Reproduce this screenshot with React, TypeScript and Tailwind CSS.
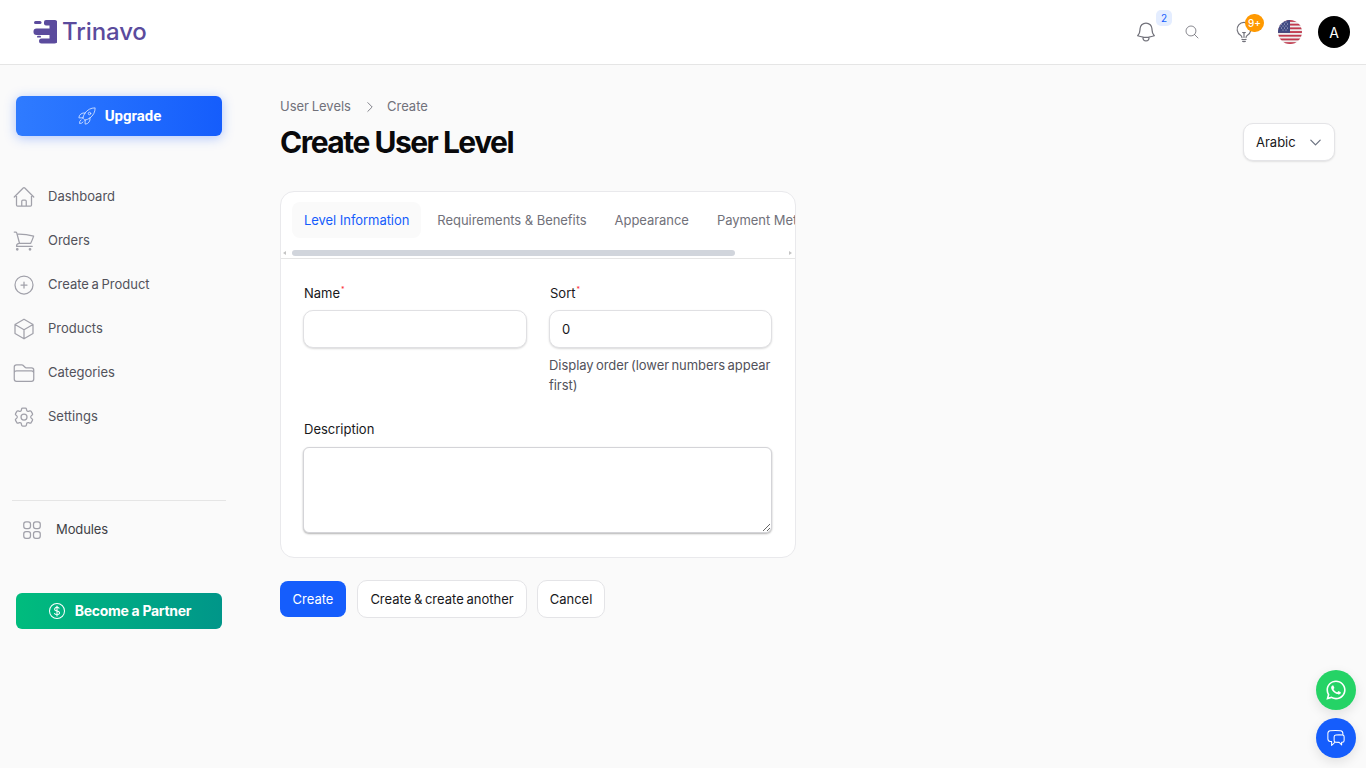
import React from "react";
import {
  HiOutlineHome, HiOutlineShoppingCart, HiOutlinePlusCircle, HiOutlineCube, HiOutlineFolder,
  HiOutlineCog6Tooth, HiOutlineSquares2X2, HiOutlineBell, HiOutlineMagnifyingGlass, HiOutlineLightBulb,
  HiOutlineRocketLaunch, HiOutlineCurrencyDollar, HiOutlineChevronRight, HiOutlineChevronDown,
  HiOutlineChatBubbleLeftRight,
} from "react-icons/hi2";
import { FaWhatsapp } from "react-icons/fa";

const nav = [
  { label: "Dashboard", Icon: HiOutlineHome },
  { label: "Orders", Icon: HiOutlineShoppingCart },
  { label: "Create a Product", Icon: HiOutlinePlusCircle },
  { label: "Products", Icon: HiOutlineCube },
  { label: "Categories", Icon: HiOutlineFolder },
  { label: "Settings", Icon: HiOutlineCog6Tooth },
];

function Logo() {
  return (
    <svg width="24" height="24" viewBox="0 0 24 24" fill="#5b4b9d">
      <rect x="11" y="0" width="13" height="5.500" rx="2" />
      <rect x="16.500" y="1" width="7.500" height="22" rx="1" />
      <rect x="0.500" y="8.500" width="20" height="6.500" rx="3" />
      <rect x="6" y="18.500" width="18" height="5" rx="2.500" />
      <rect x="1" y="1" width="7.500" height="3" rx="1.500" />
      <rect x="4" y="15.800" width="4" height="1.800" rx="0.900" />
    </svg>
  );
}

function Flag() {
  const stripes = [0, 2, 4, 6, 8, 10, 12];
  const stars = [[2, 2], [5, 2], [8, 2], [3.500, 4], [6.500, 4], [9.500, 4], [2, 6], [5, 6], [8, 6], [3.500, 8], [6.500, 8], [9.500, 8], [5, 10], [8, 10]];
  return (
    <svg width="24" height="24" viewBox="0 0 24 24" className="rounded-full">
      <rect width="24" height="24" fill="#eeeeee" />
      {stripes.map((i) => (
        <rect key={i} y={i * 1.85} width="24" height="1.85" fill="#c0394d" />
      ))}
      <rect width="12" height="12.900" fill="#414a82" />
      {stars.map(([x, y]) => (
        <circle key={`${x}-${y}`} cx={x} cy={y} r="0.500" fill="#dfe2f0" />
      ))}
    </svg>
  );
}

export default function App() {
  return (
    <div className="min-h-[768px] bg-[#fafafa] font-['Inter',sans-serif] text-[14px] text-[#18181b]">
      <header className="flex h-[65px] items-center border-b border-[#e5e5e5] bg-white pl-[33px] pr-4">
        <div className="flex items-center gap-[5px]">
          <Logo />
          <span className="text-[24px] font-medium leading-none tracking-[-0.1px] text-[#5b4b9d]">Trinavo</span>
        </div>
        <div className="ml-auto flex items-center">
          <div className="relative flex w-6 justify-center">
            <HiOutlineBell size={24} strokeWidth={1.25} className="text-[#71717a]" />
            <span className="absolute left-[22px] top-[-10px] flex h-4 w-4 items-center justify-center rounded-[5px] bg-[#e4edff] text-[10px] text-[#155dfc]">2</span>
          </div>
          <HiOutlineMagnifyingGlass size={16} strokeWidth={1.25} className="ml-[26px] text-[#71717a]" />
          <div className="relative ml-[32px] flex w-6 justify-center">
            <HiOutlineLightBulb size={22} strokeWidth={1.25} className="text-[#71717a]" />
            <span className="absolute left-[13px] top-[-7px] flex h-[18px] w-[19px] items-center justify-center rounded-full bg-[#ff9900] text-[10px] font-medium text-white">9+</span>
          </div>
          <div className="ml-[22px]"><Flag /></div>
          <div className="ml-4 flex h-8 w-8 items-center justify-center rounded-full bg-black text-[14px] text-white">A</div>
        </div>
      </header>

      <div className="flex">
        <aside className="w-[240px] shrink-0 pl-3 pt-[31px]">
          <button className="ml-1 flex h-10 w-[206px] items-center justify-center gap-2 rounded-[6px] bg-gradient-to-r from-[#2f7bff] to-[#155dfc] font-['Roboto',sans-serif] text-[15px] font-bold text-white shadow-[0_2px_12px_rgba(37,99,255,0.35)]">
            <HiOutlineRocketLaunch size={20} strokeWidth={1} className="text-[#dbe7ff]" />
            Upgrade
          </button>
          <nav className="mt-[39px] flex flex-col">
            {nav.map(({ label, Icon }) => (
              <div key={label} className="flex h-11 items-center gap-3 text-[#52525b]">
                <Icon size={24} strokeWidth={1.25} className="text-[#a1a1aa]" />
                <span className="text-[13px] [word-spacing:-1px]">{label}</span>
              </div>
            ))}
          </nav>
          <div className="mt-[61px] w-[214px] border-t border-[#e5e5e5]" />
          <div className="mt-[17px] flex h-6 items-center gap-3 pl-2 text-[#3f3f46]">
            <HiOutlineSquares2X2 size={24} strokeWidth={1.25} className="text-[#a1a1aa]" />
            <span className="text-[13px] tracking-[-0.1px]">Modules</span>
          </div>
          <button className="ml-1 mt-[51px] flex h-9 w-[206px] items-center justify-center gap-2 rounded-[6px] bg-gradient-to-r from-[#00bc7d] to-[#009689] pb-[1px] text-[14px] font-bold tracking-[-0.3px] text-white">
            <HiOutlineCurrencyDollar size={20} strokeWidth={1.25} />
            Become a Partner
          </button>
        </aside>

        <main className="flex-1 pl-10 pr-[31px] pt-[33px]">
          <div className="flex h-[18px] items-center text-[13px] text-[#71717a]">
            <span className="[word-spacing:-1px]">User Levels</span>
            <HiOutlineChevronRight size={14} className="ml-[12px] mr-[10px] text-[#71717a]" />
            <span>Create</span>
          </div>
          <div className="mt-[4px] flex items-start justify-between">
            <h1 className="mt-[4px] text-[30px] font-bold leading-[36px] tracking-[-1.5px] text-[#09090b]">Create User Level</h1>
            <button className="mt-[3px] flex h-[38px] w-[92px] items-center justify-between rounded-[10px] border border-[#e4e4e7] bg-white pl-3 pr-[11px] pt-[1px] text-[13px] text-[#18181b] shadow-[0_1px_2px_rgba(0,0,0,0.1)]">
              Arabic
              <HiOutlineChevronDown size={15} strokeWidth={2} className="text-[#6b7280]" />
            </button>
          </div>

          <section className="mt-[30px] w-[516px] overflow-hidden rounded-[14px] border border-[#e9e9ec] bg-white pb-6">
            <div className="border-b border-[#e5e5e5]">
              <div className="flex gap-1 overflow-hidden whitespace-nowrap pl-[11px] pt-[10px] text-[13px] tracking-[-0.05px] text-[#71717a]">
                <span className="flex h-9 items-center rounded-[8px] bg-[#fafafa] px-3 pt-[1px] text-[#155dfc]">Level Information</span>
                <span className="flex h-9 items-center px-3 pt-[1px]">Requirements &amp; Benefits</span>
                <span className="flex h-9 items-center px-3 pt-[1px]">Appearance</span>
                <span className="flex h-9 items-center px-3 pt-[1px]">Payment Methods</span>
              </div>
              <div className="mt-3 flex h-[8px] items-start pb-[2px]">
                <span className="ml-[2px] mt-[1px] h-0 w-0 border-y-[2.500px] border-r-[3px] border-y-transparent border-r-[#c4c4c4]" />
                <span className="ml-[6px] h-[6px] w-[443px] rounded-full bg-[#d1d5dc]" />
                <span className="ml-auto mr-[3px] mt-[1px] h-0 w-0 border-y-[2.500px] border-l-[3px] border-y-transparent border-l-[#c4c4c4]" />
              </div>
            </div>
            <div className="grid grid-cols-[224px_223px] gap-x-[22px] px-[22px] pt-6">
              <div>
                <label className="block h-5 pl-[1px] text-[13px] leading-5 text-[#18181b]">Name<sup className="top-[-6px] ml-[1px] text-[7px] text-[#fb2c36]">*</sup></label>
                <input className="mt-[7px] h-[38px] w-full rounded-[10px] border border-[#e0e0e3] bg-white shadow-[0_1px_2px_rgba(0,0,0,0.15)]" />
              </div>
              <div>
                <label className="block h-5 pl-[1px] text-[13px] leading-5 text-[#18181b]">Sort<sup className="top-[-6px] ml-[1px] text-[7px] text-[#fb2c36]">*</sup></label>
                <input defaultValue="0" className="mt-[7px] h-[38px] w-full rounded-[10px] border border-[#e0e0e3] bg-white px-3 text-[13px] text-[#18181b] shadow-[0_1px_2px_rgba(0,0,0,0.15)]" />
                <p className="mt-[7px] text-[13px] leading-5 tracking-[-0.05px] text-[#52525b] [word-spacing:-1.2px]">Display order (lower numbers appear first)</p>
              </div>
              <div className="col-span-2 mt-[24px]">
                <label className="block h-5 pl-[1px] text-[13px] leading-5 text-[#18181b]">Description</label>
                <textarea className="mt-[8px] block h-[86px] w-full rounded-[6px] border border-[#d4d4d8] bg-white shadow-[0_1px_2px_rgba(0,0,0,0.3)]" />
              </div>
            </div>
          </section>

          <div className="mt-[22px] flex items-center text-[13px]">
            <button className="h-9 w-[66px] rounded-[8px] bg-[#155dfc] pt-[1px] text-white">Create</button>
            <button className="ml-[11px] h-[38px] w-[170px] rounded-[10px] border border-[#e4e4e7] bg-white pt-[1px] text-[#18181b] [word-spacing:-1px]">Create &amp; create another</button>
            <button className="ml-[10px] h-[38px] w-[68px] rounded-[10px] border border-[#e4e4e7] bg-white pt-[1px] text-[#18181b]">Cancel</button>
          </div>
        </main>
      </div>

      <button className="fixed bottom-[58px] right-[10px] flex h-10 w-10 items-center justify-center rounded-full bg-[#25d366] text-white shadow-[0_4px_12px_rgba(0,0,0,0.1)]">
        <FaWhatsapp size={22} />
      </button>
      <button className="fixed bottom-[10px] right-[10px] flex h-10 w-10 items-center justify-center rounded-full bg-[#155dfc] text-white shadow-[0_4px_12px_rgba(0,0,0,0.1)]">
        <HiOutlineChatBubbleLeftRight size={20} strokeWidth={1.25} />
      </button>
    </div>
  );
}
